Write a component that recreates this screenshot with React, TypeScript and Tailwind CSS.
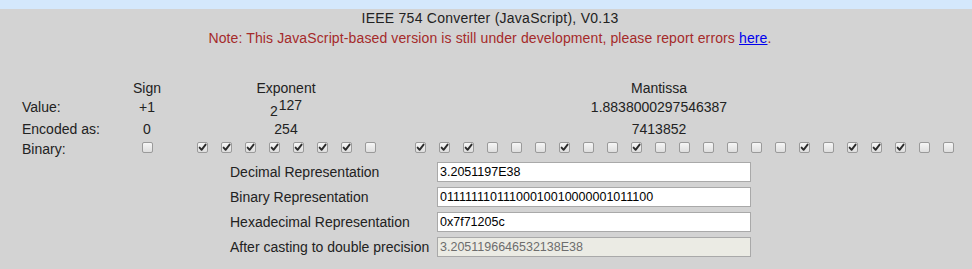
import React from 'react';

const EXPONENT_BITS = '11111110'.split('');
const MANTISSA_BITS = '11100010010000001011100'.split('');

const FIELDS = [
  { label: 'Decimal Representation', value: '3.2051197E38' },
  { label: 'Binary Representation', value: '01111111011100010010000001011100' },
  { label: 'Hexadecimal Representation', value: '0x7f71205c' },
  { label: 'After casting to double precision', value: '3.2051196646532138E38', disabled: true },
];

function BitBox({ checked }: { checked: boolean }) {
  return (
    <div className="w-[24px] flex justify-center">
      <span className="mt-[1px] w-[11px] h-[11px] rounded-[2px] border border-[#9a9a9a] bg-gradient-to-b from-[#f6f6f6] to-[#dedede] flex items-center justify-center">
        {checked && (
          <svg width="9" height="9" viewBox="0 0 9 9">
            <path d="M1.6 4.6 L3.6 6.8 L7.6 1.6" fill="none" stroke="#2b2b2b" strokeWidth="1.9" strokeLinecap="round" strokeLinejoin="round" />
          </svg>
        )}
      </span>
    </div>
  );
}

// one row of the bit table: label | sign | exponent | mantissa
function Row({
  height,
  label,
  sign,
  exponent,
  mantissa,
}: {
  height: string;
  label?: React.ReactNode;
  sign?: React.ReactNode;
  exponent?: React.ReactNode;
  mantissa?: React.ReactNode;
}) {
  return (
    <div className={`flex pl-[22px] leading-[16px] ${height}`}>
      <div className="w-[113px]">{label}</div>
      <div className="w-[24px] flex justify-center whitespace-nowrap">{sign}</div>
      <div className="w-[31px]" />
      <div className="w-[192px] flex justify-center whitespace-nowrap">{exponent}</div>
      <div className="w-[26px]" />
      <div className="w-[552px] flex justify-center whitespace-nowrap pr-[50px]">{mantissa}</div>
    </div>
  );
}

export default function App() {
  return (
    <div className="w-[972px] h-[269px] overflow-hidden bg-[#d3d3d3] text-[14px] text-[#222] font-['Liberation_Sans',Arial,sans-serif]">
      <div className="h-[9px] bg-[#d4e8fc]" />

      {/* Title */}
      <div className="pl-[8px] text-center">
        <div className="mt-[1px] leading-[16px] tracking-[0.25px]">IEEE 754 Converter (JavaScript), V0.13</div>
        <div className="mt-[4px] leading-[16px] tracking-[0.12px] text-[#a52a2a]">
          Note: This JavaScript-based version is still under development, please report errors{' '}
          <a href="#" className="text-[#0000ee] underline">here</a>.
        </div>
      </div>

      {/* Bit table */}
      <div className="mt-[34px]">
        <Row height="h-[19px]" sign="Sign" exponent="Exponent" mantissa="Mantissa" />
        <Row
          height="h-[22px]"
          label="Value:"
          sign="+1"
          exponent={
            <div className="flex items-start">
              <span className="pt-[4px]">2</span>
              <span className="-mt-[2px] ml-[1px]">127</span>
            </div>
          }
          mantissa="1.8838000297546387"
        />
        <Row height="h-[20px]" label="Encoded as:" sign="0" exponent="254" mantissa="7413852" />
        <div className="flex pl-[22px] leading-[16px] h-[16px]">
          <div className="w-[113px]">Binary:</div>
          <BitBox checked={false} />
          <div className="w-[31px]" />
          <div className="flex">
            {EXPONENT_BITS.map((b, i) => (
              <BitBox key={i} checked={b === '1'} />
            ))}
          </div>
          <div className="w-[26px]" />
          <div className="flex">
            {MANTISSA_BITS.map((b, i) => (
              <BitBox key={i} checked={b === '1'} />
            ))}
          </div>
        </div>
      </div>

      {/* Representations */}
      <div className="mt-[5px] flex flex-col gap-[5px] pl-[230px]">
        {FIELDS.map(f => (
          <div key={f.label} className="flex items-center h-[20px]">
            <div className="w-[207px] leading-[16px] whitespace-nowrap">{f.label}</div>
            <input
              readOnly
              disabled={f.disabled}
              value={f.value}
              className={`w-[314px] h-[20px] border border-[#a9a9a9] px-[2px] text-[12.5px] outline-none font-['Liberation_Sans',Arial,sans-serif] ${
                f.disabled ? 'bg-[#ebebe4] text-[#6d6d6d]' : 'bg-white text-black'
              }`}
            />
          </div>
        ))}
      </div>
    </div>
  );
}
